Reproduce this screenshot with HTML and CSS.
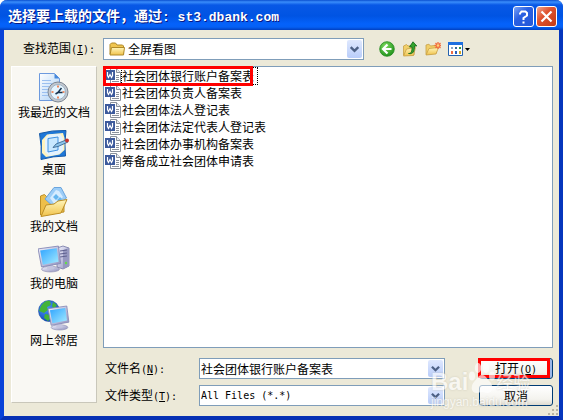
FILE: index.html
```html
<!DOCTYPE html>
<html lang="zh-CN">

<head>
    <meta charset="UTF-8" />
    <meta name="viewport" content="width=device-width, initial-scale=1.0" />
    <title>选择要上载的文件</title>
    <link rel="stylesheet" href="styles.css">
</head>

<body>
    <!-- shared gradients and symbols -->
    <svg class="defs" aria-hidden="true">
        <defs>
            <linearGradient id="gScreen" x1="0" y1="0" x2="1" y2="1">
                <stop offset="0" stop-color="#2fa4ff" />
                <stop offset="1" stop-color="#a5ebff" />
            </linearGradient>
            <linearGradient id="gFolder" x1="0" y1="0" x2="0" y2="1">
                <stop offset="0" stop-color="#fff6bd" />
                <stop offset="1" stop-color="#f0c24a" />
            </linearGradient>
            <linearGradient id="gPaper" x1="0" y1="0" x2="1" y2="1">
                <stop offset="0" stop-color="#ffffff" />
                <stop offset="1" stop-color="#a9cff5" />
            </linearGradient>
            <linearGradient id="gMetal" x1="0" y1="0" x2="1" y2="1">
                <stop offset="0" stop-color="#f4f4ff" />
                <stop offset="1" stop-color="#8f90bd" />
            </linearGradient>
            <radialGradient id="gGlobe" cx="0.35" cy="0.3" r="0.8">
                <stop offset="0" stop-color="#4c9dff" />
                <stop offset="1" stop-color="#0b3fb5" />
            </radialGradient>
            <radialGradient id="gBack" cx="0.4" cy="0.3" r="0.8">
                <stop offset="0" stop-color="#7fda5e" />
                <stop offset="1" stop-color="#158a14" />
            </radialGradient>
        </defs>
        <symbol id="word" viewBox="0 0 16 16">
            <path d="M5.5 .5h6l4 4v11h-10z" fill="#fff" stroke="#8b929c" />
            <path d="M11.500 .5v4h4" fill="#e8ebf2" stroke="#8b929c" />
            <path d="M11 7.500h3M11 9.500h3M11 11.500h3M7 13.500h7" stroke="#8b929c" />
            <path d="M0 2h10v10H0z" fill="#3c5a9c" />
            <path d="M2.500 4v3.500l1 2 1.500-3 1.500 3 1-2V4" fill="none" stroke="#fff" stroke-width="1.200" />
        </symbol>
        <symbol id="monitor" viewBox="0 0 24 24">
            <ellipse cx="12" cy="21" rx="8" ry="2.500" fill="url(#gMetal)" stroke="#8a8bb0" stroke-width=".6" />
            <path d="M9 16h5l1 5H9z" fill="#c4c5df" />
            <path d="M1 3l18-2.500 2 15.500-17 3z" fill="url(#gMetal)" stroke="#8588b5" stroke-width=".8" />
            <path d="M2.800 4.500L17.500 2.500l1.700 12L5.200 17z" fill="url(#gScreen)" />
        </symbol>
        <symbol id="arrow" viewBox="0 0 15 19">
            <path d="M3.500 7.500l4 4 4-4" fill="none" stroke="#4d6185" stroke-width="2.500" />
        </symbol>
    </svg>

    <div class="window">
        <header class="titlebar">
            <h1>选择要上载的文件，通过<span class="latin">: st3.dbank.com</span></h1>
            <button class="win-btn" type="button" aria-label="帮助">
                <svg viewBox="0 0 19 19"><path d="M6 7.500V6.500L7.500 4.500h4L13 6v2.500L9.500 11v2M9.500 14.500v2" fill="none" stroke="#fff" stroke-width="2" /></svg>
            </button>
            <button class="win-btn close" type="button" aria-label="关闭">
                <svg viewBox="0 0 19 19"><path d="M4.500 4.500l10 10M14.500 4.500l-10 10" stroke="#fff" stroke-width="2.200" /></svg>
            </button>
        </header>

        <form class="dialog">
            <div class="lookup">
                <label for="folder">查找范围<span class="latin">(<u>I</u>):</span></label>
                <div class="combo">
                    <svg class="folder-icon" viewBox="0 0 16 16">
                        <path d="M1 13V3.500L2.500 2h4l1.500 2h5.500l1 1V13z" fill="#f0c550" stroke="#b08a2a" />
                        <path d="M1 14l1.500-7.500h13L14.500 14z" fill="url(#gFolder)" stroke="#b08a2a" />
                    </svg>
                    <select id="folder">
                        <option>全屏看图</option>
                    </select>
                    <svg class="drop"><use href="#arrow" /></svg>
                </div>
                <div class="toolbar">
                    <button type="button" aria-label="后退">
                        <svg viewBox="0 0 16 16">
                            <circle cx="8" cy="8" r="7.300" fill="url(#gBack)" stroke="#238a20" stroke-width=".8" />
                            <path d="M8.500 3.500L4 8l4.500 4.500M4.500 8H12.500" fill="none" stroke="#fff" stroke-width="2.200" />
                        </svg>
                    </button>
                    <button type="button" aria-label="向上一级">
                        <svg viewBox="0 0 16 16">
                            <path d="M1.500 14V5l3-1.500L6 5l6-1v10z" fill="#f1cf69" stroke="#c7a045" stroke-width=".8" />
                            <path d="M1.500 15l3-7 9-1.500-2 8z" fill="url(#gFolder)" stroke="#c7a045" stroke-width=".8" />
                            <path d="M6.500 12.500c3 0 3.500-2 3.500-6.500H7.500L11 .8 14.800 5h-2.300c0 5-1 8.500-6 7.500z" fill="#35a52d" stroke="#12661a" stroke-width=".8" />
                        </svg>
                    </button>
                    <button type="button" aria-label="新建文件夹">
                        <svg viewBox="0 0 16 16">
                            <path d="M1 13.500V4l3-.8L5.500 5l6-.8V12z" fill="#f1cf69" stroke="#c7a045" stroke-width=".8" />
                            <path d="M1 14l3-6.500 9.500-1L11 13z" fill="url(#gFolder)" stroke="#c7a045" stroke-width=".8" />
                            <path d="M13 1v7M9.500 4.500h7M10.500 2l5 5M15.500 2l-5 5" stroke="#f26a3d" stroke-width="1.300" />
                            <circle cx="13" cy="4.500" r="1.300" fill="#ffd27a" />
                        </svg>
                    </button>
                    <button class="views" type="button" aria-label="查看菜单">
                        <svg viewBox="0 0 23 16">
                            <path d="M.5 1.500h14v13H.5z" fill="#fff" stroke="#2462ae" />
                            <path d="M0 1h15v3H0z" fill="#1d6fe0" />
                            <path d="M3 6h2v2H3z" fill="#8aa7c8" /><path d="M7 6h2v2H7z" fill="#34689e" /><path d="M11 6h2v2h-2z" fill="#2c9640" />
                            <path d="M3 10h2v3H3z" fill="#ee6b45" /><path d="M7 10h2v3H7z" fill="#2860ba" /><path d="M11 10h2v3h-2z" fill="#d3a51d" />
                            <path d="M17 7h5l-2.500 3z" fill="#000" />
                        </svg>
                    </button>
                </div>
            </div>

            <div class="content">
                <nav class="places">
                    <a href="#">
                        <svg viewBox="0 0 32 32">
                            <path d="M1.500 1.500h15l5 5v22h-20z" fill="url(#gPaper)" stroke="#6d9ade" />
                            <path d="M16.500 1.500v5h5z" fill="#4789dc" />
                            <path d="M4 8.500h9M4 11.500h10M4 14.500h7M4 17.500h6M4 20.500h6M4 23.500h7" stroke="#9bc0f0" />
                            <circle cx="20" cy="20" r="10" fill="#c3c8cf" stroke="#7d8793" />
                            <circle cx="20" cy="20" r="7.500" fill="#e5f5ff" stroke="#9fb4c6" />
                            <path d="M20 13.500v2M20 24.500v2M13.500 20h2M24.500 20h2" stroke="#f06d35" stroke-width="1.600" />
                            <path d="M23.500 16l-3.500 4.500h4.500M20 20.500l-2.500 1.500" fill="none" stroke="#18344f" stroke-width="1.500" />
                        </svg>
                        我最近的文档
                    </a>
                    <a href="#">
                        <svg viewBox="0 0 32 32">
                            <path d="M1.500 4.500Q14 1 28 1.500Q26 14 27.500 27Q15 27 3 30.500Q4 17 1.500 4.500z" fill="#1f78d8" stroke="#155aa8" />
                            <path d="M4 11l5-5.500L25 4l1.500 5v12l-5 4.500L8 28l-4-4z" fill="#fff3bd" />
                            <path d="M7 10l4-4.500L22 5l3 4v12l-4 4-10 2-4-4z" fill="#e4f3ff" />
                            <path d="M10 9.500l10-1.500v13l-10 2z" fill="#c9e8ff" stroke="#3f92e2" />
                            <path d="M15 18.500l3-3.500 10-4 2 2-10 4.500z" fill="#8ec4ea" stroke="#2c5a88" stroke-width=".8" />
                            <circle cx="29" cy="11.500" r="2" fill="#c8322b" />
                        </svg>
                        桌面
                    </a>
                    <a href="#">
                        <svg viewBox="0 0 32 32">
                            <path d="M2.500 29V10l4-1.500L9 11l9 0 8 3v12z" fill="#eebf49" stroke="#bd8f27" />
                            <path d="M7 13L16 1.500h7L28.500 12 17 22z" fill="#9ccdf7" stroke="#6ba5dd" />
                            <path d="M12 12l6-8 3 1 4 6-8 8z" fill="#d6ecff" />
                            <path d="M15 11l3-3 3 3-3 3zM19 14l3-3 2 2-3 3z" fill="#65b6ef" />
                            <path d="M3 30.500L8 19l8-1 4-3 9-1.500L23 27z" fill="url(#gFolder)" stroke="#bd8f27" />
                        </svg>
                        我的文档
                    </a>
                    <a href="#">
                        <svg viewBox="0 0 32 32">
                            <path d="M19 5l6-2 6 2v18l-6 3-6-2z" fill="url(#gMetal)" stroke="#7476a3" stroke-width=".8" />
                            <path d="M25 7l6-2v18l-6 3z" fill="#9698c0" />
                            <path d="M22 8l7-1M22 11l7-1M22 14l7-1" stroke="#5f618f" />
                            <circle cx="28" cy="20" r="1.200" fill="#62df43" />
                            <use href="#monitor" x="-1" y="0" width="27" height="32" />
                        </svg>
                        我的电脑
                    </a>
                    <a href="#">
                        <svg viewBox="0 0 32 32">
                            <circle cx="11" cy="11" r="10.500" fill="url(#gGlobe)" stroke="#1a4b9d" stroke-width=".6" />
                            <path d="M3 6q4-6 9-5l1 4-4 2 1 3-4 3-5-2zM7 14l5 1 1 3-3 3-4-3zM15 2l4 3-3 4-2-3z" fill="#43b339" />
                            <use href="#monitor" x="9" y="4" width="25" height="28" />
                        </svg>
                        网上邻居
                    </a>
                </nav>

                <div class="main">
                    <ul class="files">
                        <li class="selected"><svg><use href="#word" /></svg><span>社会团体银行账户备案表</span></li>
                        <li><svg><use href="#word" /></svg><span>社会团体负责人备案表</span></li>
                        <li><svg><use href="#word" /></svg><span>社会团体法人登记表</span></li>
                        <li><svg><use href="#word" /></svg><span>社会团体法定代表人登记表</span></li>
                        <li><svg><use href="#word" /></svg><span>社会团体办事机构备案表</span></li>
                        <li><svg><use href="#word" /></svg><span>筹备成立社会团体申请表</span></li>
                    </ul>

                    <div class="fields">
                        <label for="filename">文件名<span class="latin">(<u>N</u>):</span></label>
                        <div class="combo">
                            <input id="filename" type="text" value="社会团体银行账户备案表">
                            <svg class="drop"><use href="#arrow" /></svg>
                        </div>
                        <button class="btn open" type="submit">打开<span class="latin">(<u>O</u>)</span></button>

                        <label for="filetype">文件类型<span class="latin">(<u>T</u>):</span></label>
                        <div class="combo">
                            <select id="filetype" class="latin">
                                <option>All Files (*.*)</option>
                            </select>
                            <svg class="drop"><use href="#arrow" /></svg>
                        </div>
                        <button class="btn" type="button">取消</button>
                    </div>
                </div>
            </div>
        </form>

        <svg class="grip" viewBox="0 0 12 12">
            <path d="M9 1h2v2H9zM5 5h2v2H5zM9 5h2v2H9zM1 9h2v2H1zM5 9h2v2H5zM9 9h2v2H9z" fill="#b8b4a3" />
        </svg>

        <div class="watermark">
            <div class="brand">
                <span>Bai</span>
                <svg viewBox="0 0 28 32">
                    <ellipse cx="4" cy="14" rx="3" ry="4.500" />
                    <ellipse cx="10" cy="6" rx="3.200" ry="5" />
                    <ellipse cx="18" cy="6" rx="3.200" ry="5" />
                    <ellipse cx="24" cy="14" rx="3" ry="4.500" />
                    <path d="M14 13c4 0 5 4 8 7s4 11-3 11c-2 0-3-1-5-1s-3 1-5 1c-7 0-6-8-3-11s4-7 8-7z" />
                </svg>
                <span class="cn">经验</span>
            </div>
            <div class="site">jingyan.baidu.com</div>
        </div>
    </div>
</body>

</html>
```

FILE: styles.css
```css
* {
    box-sizing: border-box;
}

body {
    margin: 0;
    background-color: #fff;
    font-family: "Noto Sans CJK SC", sans-serif;
    font-size: 12px;
    line-height: 16px;
    color: #000;
}

button,
input,
select {
    font: inherit;
    color: inherit;
    margin: 0;
    padding: 0;
    border: none;
    background: none;
}

svg {
    display: block;
    flex: none;
}

.defs {
    position: absolute;
    width: 0;
    height: 0;
}

.latin {
    font-family: "DejaVu Sans Mono", "Liberation Mono", monospace;
    font-size: 10px;
}

.window {
    position: relative;
    display: flex;
    flex-direction: column;
    min-height: 100vh;
    border: 4px solid #0842d8;
    border-top: none;
    border-right-color: #0636bd;
    border-bottom-color: #0630b4;
    border-radius: 7px 7px 0 0;
    background-color: #ece9d8;
}

/* title bar */
.titlebar {
    display: flex;
    align-items: center;
    gap: 2px;
    height: 30px;
    margin: 0 -4px;
    padding: 3px 6px 0 8px;
    border-radius: 7px 7px 0 0;
    background: linear-gradient(#0a4fd0 0, #3a8dfb 2px, #0858e6 5px, #0054e3 16px, #0462fb 24px, #0560f5 27px, #0140c0 30px);
}

.titlebar h1 {
    flex: 1;
    margin: 0;
    font-size: 14px;
    font-weight: bold;
    line-height: 20px;
    color: #fff;
    text-shadow: 1px 1px #0a1883;
}

.titlebar .latin {
    font-family: "Liberation Mono", monospace;
    font-size: 13px;
}

.win-btn {
    width: 21px;
    height: 21px;
    border: 1px solid #fff;
    border-radius: 3px;
    background: linear-gradient(135deg, #7aa3f5, #2a60e2 40%, #2458d8);
}

.win-btn.close {
    background: linear-gradient(135deg, #f0a58d, #df5330 40%, #c53b13);
}

/* dialog body */
.dialog {
    display: flex;
    flex: 1;
    flex-direction: column;
    gap: 6px;
    padding: 8px 6px 10px 7px;
}

.lookup {
    display: flex;
    align-items: center;
}

.lookup label {
    width: 92px;
    padding-left: 12px;
}

.combo {
    position: relative;
    display: flex;
    flex: 1;
    align-items: center;
    height: 21px;
    padding-left: 1px;
    border: 1px solid #7f9db9;
    background-color: #fff;
}

.lookup .combo {
    height: 22px;
    padding-left: 5px;
}

.combo input,
.combo select {
    flex: 1;
    width: 100%;
    min-width: 0;
    height: 19px;
    appearance: none;
    outline: none;
}

.folder-icon {
    width: 16px;
    height: 16px;
    margin-right: 3px;
}

.drop {
    position: absolute;
    top: 1px;
    right: 1px;
    bottom: 1px;
    width: 15px;
    height: calc(100% - 2px);
    border-radius: 2px;
    background: linear-gradient(#dfe8fe, #b9cdfa);
    pointer-events: none;
}

.toolbar {
    display: flex;
    gap: 7px;
    width: 189px;
    padding-left: 15px;
}

.toolbar button {
    width: 16px;
    height: 16px;
}

.toolbar .views {
    width: 23px;
}

.content {
    display: flex;
    flex: 1;
    gap: 6px;
}

/* places bar */
.places {
    display: flex;
    flex-direction: column;
    gap: 9px;
    width: 86px;
    margin-bottom: 3px;
    padding-top: 5px;
    border: 1px solid #fff;
    border-right-color: #c9c7ba;
    border-bottom-color: #c9c7ba;
    background-color: #f9f8f3;
}

.places a {
    display: flex;
    flex-direction: column;
    align-items: center;
    color: #000;
    text-decoration: none;
}

.places svg {
    width: 32px;
    height: 32px;
}

.main {
    display: flex;
    flex: 1;
    flex-direction: column;
    gap: 10px;
}

/* file list */
.files {
    flex: 1;
    margin: 0;
    padding: 0;
    list-style: none;
    border: 1px solid #7f9db9;
    background-color: #fff;
}

.files li {
    display: flex;
    align-items: center;
    gap: 1px;
    width: max-content;
    height: 17px;
    padding-left: 1px;
}

.files svg {
    width: 16px;
    height: 16px;
}

.files .selected {
    position: relative;
}

.files .selected span {
    padding-right: 3px;
    outline: 1px dotted #000;
}

.files .selected::after {
    content: "";
    position: absolute;
    inset: -1px 4px -2px -1px;
    border: 3px solid #f00;
}

/* file name and type */
.fields {
    display: grid;
    grid-template-columns: 96px 1fr 74px;
    row-gap: 6px;
    align-items: center;
}

.fields label {
    padding-left: 2px;
}

.fields .combo {
    margin-right: 34px;
}

.btn {
    position: relative;
    height: 21px;
    border: 1px solid #003c74;
    border-radius: 3px;
    background: linear-gradient(#fff, #f4f3ee 70%, #dedbd0);
}

.btn.open {
    box-shadow: inset -2px -2px #9ab8ea;
}

.btn.open::after {
    content: "";
    position: absolute;
    inset: -1px 2px 0 -2px;
    border: 3px solid #f00;
}

.grip {
    position: absolute;
    right: 0;
    bottom: 0;
    width: 12px;
    height: 12px;
}

/* watermark */
.watermark {
    position: absolute;
    right: 24px;
    bottom: 6px;
    width: 104px;
    color: #fff;
    opacity: 0.65;
    text-shadow: 0 0 2px #bbb7a8;
    pointer-events: none;
}

.brand {
    display: flex;
    align-items: flex-end;
    font-family: "Liberation Sans", sans-serif;
    font-size: 24px;
    font-weight: bold;
    line-height: 24px;
}

.brand svg {
    width: 28px;
    height: 32px;
    fill: #fff;
}

.brand .cn {
    font-family: "Noto Sans CJK SC", sans-serif;
    font-size: 17px;
    font-weight: normal;
}

.site {
    font-family: "Liberation Sans", sans-serif;
    font-size: 12px;
    line-height: 16px;
}
```
